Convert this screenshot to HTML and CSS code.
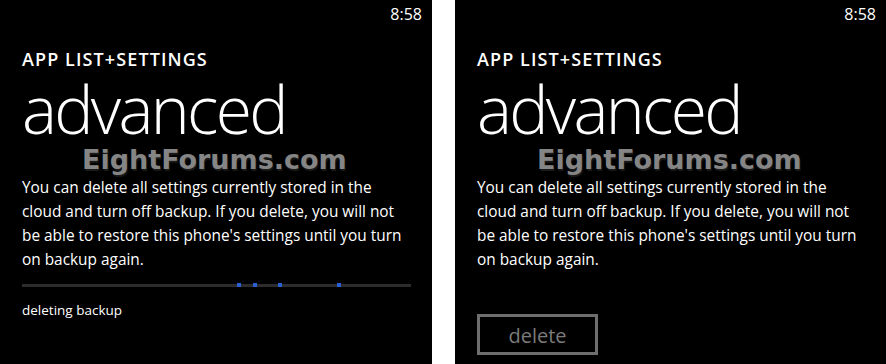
FILE: index.html
```html
<!DOCTYPE html>
<html>
<head>
<meta charset="utf-8">
<link rel="stylesheet" href="styles.css">
</head>
<body>
<div class="pair">
  <section class="phone">
    <div class="status">8:58</div>
    <div class="app">APP LIST+SETTINGS</div>
    <div class="title">advanced</div>
    <div class="mark">EightForums.com</div>
    <p class="body">You can delete all settings currently stored in the<br>cloud and turn off backup. If you delete, you will not<br>be able to restore this phone's settings until you turn<br>on backup again.</p>
    <div class="progress">
      <span class="dot d1"></span><span class="dot d2"></span><span class="dot d3"></span><span class="dot d4"></span>
    </div>
    <div class="status-text">deleting backup</div>
  </section>
  <section class="phone right">
    <div class="status">8:58</div>
    <div class="app">APP LIST+SETTINGS</div>
    <div class="title">advanced</div>
    <div class="mark">EightForums.com</div>
    <p class="body">You can delete all settings currently stored in the<br>cloud and turn off backup. If you delete, you will not<br>be able to restore this phone's settings until you turn<br>on backup again.</p>
    <button class="btn" type="button">delete</button>
  </section>
</div>
</body>
</html>
```

FILE: styles.css
```css
html, body {
  margin: 0;
  padding: 0;
  background: #fff;
}
.pair {
  display: flex;
  gap: 23px;
  height: 364px;
}
.phone {
  width: 432px;
  height: 364px;
  background: #000;
  color: #fff;
  font-family: "Open Sans", "Noto Sans", sans-serif;
  padding: 4px 10px 0 22px;
  box-sizing: border-box;
  display: flex;
  flex-direction: column;
  overflow: hidden;
}
.phone.right {
  width: 431px;
}
.status {
  align-self: flex-end;
  font-size: 16px;
  line-height: 20px;
}
.app {
  margin-top: 25px;
  font-size: 18px;
  font-weight: 600;
  line-height: 20px;
  letter-spacing: 1.1px;
}
.title {
  margin-top: 5px;
  font-size: 66px;
  font-weight: 300;
  line-height: 68px;
  letter-spacing: -2.7px;
}
.mark {
  margin: 3px 0 0 60px;
  font-family: "DejaVu Sans", sans-serif;
  font-weight: bold;
  font-size: 27px;
  line-height: 30px;
  color: #858585;
  text-shadow: 1px 2px 1px #1a1a1a;
}
.body {
  margin: 1px 0 0;
  font-size: 15.4px;
  line-height: 24px;
  white-space: nowrap;
}
.progress {
  margin-top: 12px;
  width: 389px;
  height: 3px;
  background: #2c2c2c;
  position: relative;
}
.dot {
  position: absolute;
  top: -1px;
  width: 4px;
  height: 4px;
  background: #2a5fd6;
}
.d1 { left: 215px; }
.d2 { left: 231px; }
.d3 { left: 256px; }
.d4 { left: 315px; }
.status-text {
  margin-top: 13px;
  font-size: 13.5px;
  line-height: 20px;
}
.btn {
  margin-top: 42px;
  align-self: flex-start;
  width: 121px;
  height: 41px;
  background: #000;
  border: 3px solid #6e6e6e;
  color: #7b7b7b;
  font-family: "Open Sans", "Noto Sans", sans-serif;
  font-size: 20px;
  line-height: 1;
  padding: 3px 0 0;
}
```
